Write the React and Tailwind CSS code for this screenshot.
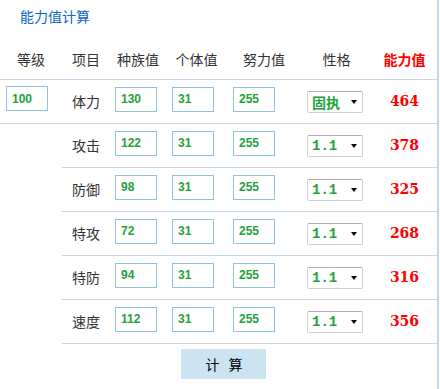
const stats = [
  { name: '体力', base: 130, iv: 31, ev: 255, nature: '固执', value: 464 },
  { name: '攻击', base: 122, iv: 31, ev: 255, nature: '1.1', value: 378 },
  { name: '防御', base: 98, iv: 31, ev: 255, nature: '1.1', value: 325 },
  { name: '特攻', base: 72, iv: 31, ev: 255, nature: '1.1', value: 268 },
  { name: '特防', base: 94, iv: 31, ev: 255, nature: '1.1', value: 316 },
  { name: '速度', base: 112, iv: 31, ev: 255, nature: '1.1', value: 356 },
];

const cjk = "font-['Noto_Sans_CJK_SC',sans-serif]";

function NumInput({ value }) {
  return (
    <input
      defaultValue={value}
      className="mb-[6px] h-[25px] w-[42px] border border-[#8fc4df] bg-white pl-[5px] text-[12px] font-bold text-[#1fa33b] outline-none font-['Liberation_Sans',sans-serif]"
    />
  );
}

function NatureSelect({ value }) {
  const isText = value === '固执';
  return (
    <div className="flex h-[22px] w-[56px] items-center rounded-[2px] border border-[#cfcfd4] border-t-[#aeaeae] bg-white pl-[4px]">
      <span
        className={
          isText
            ? `${cjk} text-[14px] font-bold leading-none text-[#1fa33b]`
            : "font-['Liberation_Mono',monospace] text-[14px] font-bold leading-none text-[#1fa33b]"
        }
      >
        {value}
      </span>
      <span className="ml-auto mr-[5px] h-0 w-0 border-x-[3.5px] border-t-[4px] border-x-transparent border-t-black" />
    </div>
  );
}

function Cells({ s }) {
  return (
    <>
      <div className={`${cjk} flex w-[48px] justify-center text-[14px] text-[#333]`}>{s.name}</div>
      <div className="w-[56px] pl-[5px]">
        <NumInput value={s.base} />
      </div>
      <div className="w-[61px] pl-[6px]">
        <NumInput value={s.iv} />
      </div>
      <div className="w-[74px] pl-[6px]">
        <NumInput value={s.ev} />
      </div>
      <div className="w-[71px] pl-[6px]">
        <NatureSelect value={s.nature} />
      </div>
      <div className="flex w-[65px] justify-center font-['DejaVu_Serif',serif] text-[14px] font-bold text-[#ff0000]">
        {s.value}
      </div>
    </>
  );
}

export default function App() {
  return (
    <div className="min-h-[389px] w-[439px] border-r-2 border-[#c3d9ea] bg-white">
      <div className={`${cjk} h-[39px] pl-[20px] pt-[6px] text-[14px] leading-[20px] text-[#0a66c8]`}>
        能力值计算
      </div>

      <div className={`${cjk} flex h-[41px] items-center border-b border-[#c9d7e4] text-[14px] text-[#333]`}>
        <div className="w-[62px] text-center">等级</div>
        <div className="w-[48px] text-center">项目</div>
        <div className="w-[56px] text-center">种族值</div>
        <div className="w-[61px] text-center">个体值</div>
        <div className="w-[74px] text-center">努力值</div>
        <div className="w-[71px] text-center">性格</div>
        <div className="w-[65px] text-center font-bold text-[#ff0000]">能力值</div>
      </div>

      {stats.map((s, i) => (
        <div key={s.name} className={`flex h-[44px] ${i === 0 ? 'border-b border-[#c9d7e4]' : ''}`}>
          <div className="flex w-[62px] items-center pl-[6px]">
            {i === 0 && <NumInput value={100} />}
          </div>
          <div className={`flex flex-1 items-center ${i > 0 ? 'border-b border-[#c9d7e4]' : ''}`}>
            <Cells s={s} />
          </div>
        </div>
      ))}

      <div className="pl-[181px] pt-[5px]">
        <button className={`${cjk} flex h-[30px] w-[85px] items-center justify-center gap-[9px] bg-[#cce3f1] pl-[1px] text-[14px] text-black`}>
          <span>计</span>
          <span>算</span>
        </button>
      </div>
    </div>
  );
}
